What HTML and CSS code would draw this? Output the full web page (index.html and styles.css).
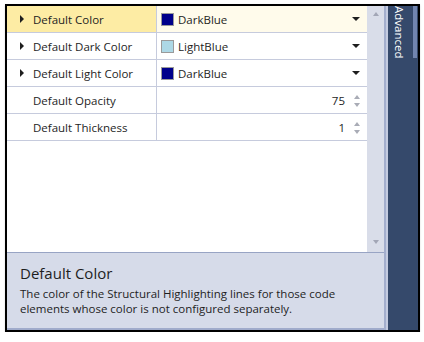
FILE: index.html
```html
<!DOCTYPE html>
<html lang="en">
  <head>
    <meta charset="UTF-8">
    <title>Properties</title>
    <link rel="stylesheet" href="styles.css">
  </head>
  <body>
    <div class="frame">
      <div class="main">
        <div class="grid-area">
          <div class="props">
            <div class="row selected">
              <div class="name"><span class="expander"></span>Default Color</div>
              <div class="value">
                <span class="swatch dark-blue"></span>
                <span class="text">DarkBlue</span>
                <span class="dropdown"></span>
              </div>
            </div>
            <div class="row">
              <div class="name"><span class="expander"></span>Default Dark Color</div>
              <div class="value">
                <span class="swatch light-blue"></span>
                <span class="text">LightBlue</span>
                <span class="dropdown"></span>
              </div>
            </div>
            <div class="row">
              <div class="name"><span class="expander"></span>Default Light Color</div>
              <div class="value">
                <span class="swatch dark-blue"></span>
                <span class="text">DarkBlue</span>
                <span class="dropdown"></span>
              </div>
            </div>
            <div class="row">
              <div class="name">Default Opacity</div>
              <div class="value number">
                <span class="text">75</span>
                <span class="spinner"><span class="up"></span><span class="down"></span></span>
              </div>
            </div>
            <div class="row">
              <div class="name">Default Thickness</div>
              <div class="value number">
                <span class="text">1</span>
                <span class="spinner"><span class="up"></span><span class="down"></span></span>
              </div>
            </div>
          </div>
          <div class="scrollbar">
            <span class="arrow-up"></span>
            <span class="arrow-down"></span>
          </div>
        </div>
        <div class="description">
          <div class="desc-title">Default Color</div>
          <div class="desc-text">The color of the Structural Highlighting lines for those code elements whose color is not configured separately.</div>
        </div>
      </div>
      <div class="divider"></div>
      <div class="sidebar">
        <div class="tab">
          <span class="tab-label">Advanced</span>
          <span class="tab-bar"></span>
        </div>
      </div>
    </div>
  </body>
</html>
```

FILE: styles.css
```css
body {
    margin: 0;
    background: white;
    font-family: "Open Sans", "Liberation Sans", sans-serif;
    font-size: 11.5px;
    color: #1e1e1e;
  }

  .frame {
    display: flex;
    margin: 4px 0 0 5px;
    width: 411px;
    height: 324px;
    border: 2px solid #000;
    box-shadow: 0 1px 2px rgba(0, 0, 0, 0.15);
  }

  .main {
    width: 377px;
    display: flex;
    flex-direction: column;
  }

  .grid-area {
    display: flex;
    height: 246px;
    background: white;
  }

  .props {
    width: 360px;
  }

  .row {
    display: flex;
    height: 26px;
    border-bottom: 1px solid #c6cbdd;
  }

  .name {
    width: 150px;
    border-right: 1px solid #c6cbdd;
    display: flex;
    align-items: center;
    padding-left: 26px;
    box-sizing: border-box;
    position: relative;
  }

  .expander {
    position: absolute;
    left: 13px;
    top: 9px;
    width: 0;
    height: 0;
    border-top: 4px solid transparent;
    border-bottom: 4px solid transparent;
    border-left: 4px solid #1e1e1e;
  }

  .selected .name {
    background: #fdeca4;
  }

  .selected .value {
    background: #fffbeb;
  }

  .value {
    flex: 1;
    display: flex;
    align-items: center;
    padding: 0 7px 0 4px;
  }

  .swatch {
    width: 11px;
    height: 11px;
    border: 1px solid #9a9a9a;
    margin-right: 4px;
  }

  .dark-blue {
    background: #00008b;
  }

  .light-blue {
    background: #add8e6;
  }

  .value .text {
    flex: 1;
  }

  .dropdown {
    width: 0;
    height: 0;
    border-left: 4px solid transparent;
    border-right: 4px solid transparent;
    border-top: 4px solid #1e1e1e;
  }

  .number .text {
    text-align: right;
    padding-right: 9px;
  }

  .spinner {
    display: flex;
    flex-direction: column;
    gap: 4px;
    padding-top: 1px;
  }

  .spinner .up {
    border-left: 3.5px solid transparent;
    border-right: 3.5px solid transparent;
    border-bottom: 4px solid #a9acb6;
  }

  .spinner .down {
    border-left: 3.5px solid transparent;
    border-right: 3.5px solid transparent;
    border-top: 4px solid #a9acb6;
  }

  .scrollbar {
    width: 17px;
    background: #d9dde9;
    display: flex;
    flex-direction: column;
    justify-content: space-between;
    align-items: center;
    padding: 6px 0 8px;
    box-sizing: border-box;
  }

  .arrow-up {
    border-left: 3.5px solid transparent;
    border-right: 3.5px solid transparent;
    border-bottom: 4px solid #a2a6b6;
  }

  .arrow-down {
    border-left: 3.5px solid transparent;
    border-right: 3.5px solid transparent;
    border-top: 4px solid #a2a6b6;
  }

  .description {
    flex: 1;
    background: #d6dbe9;
    border-top: 1px solid #98a4c4;
    border-bottom: 2px solid #a0abcb;
    padding: 10px 13px 0;
  }

  .desc-title {
    font-size: 15px;
    line-height: 20px;
  }

  .desc-text {
    margin-top: 3px;
    line-height: 15px;
    width: 340px;
  }

  .divider {
    width: 4px;
    background: linear-gradient(to right, #a3aecd 0 2px, #c4cbe0 2px);
  }

  .sidebar {
    flex: 1;
    background: #35496b;
  }

  .tab {
    display: flex;
    height: 52px;
    padding-left: 4px;
  }

  .tab-label {
    writing-mode: vertical-rl;
    color: white;
    line-height: 14px;
    font-size: 11.5px;
  }

  .tab-bar {
    width: 4px;
    margin-left: 7px;
    background: #7185b0;
  }
```
